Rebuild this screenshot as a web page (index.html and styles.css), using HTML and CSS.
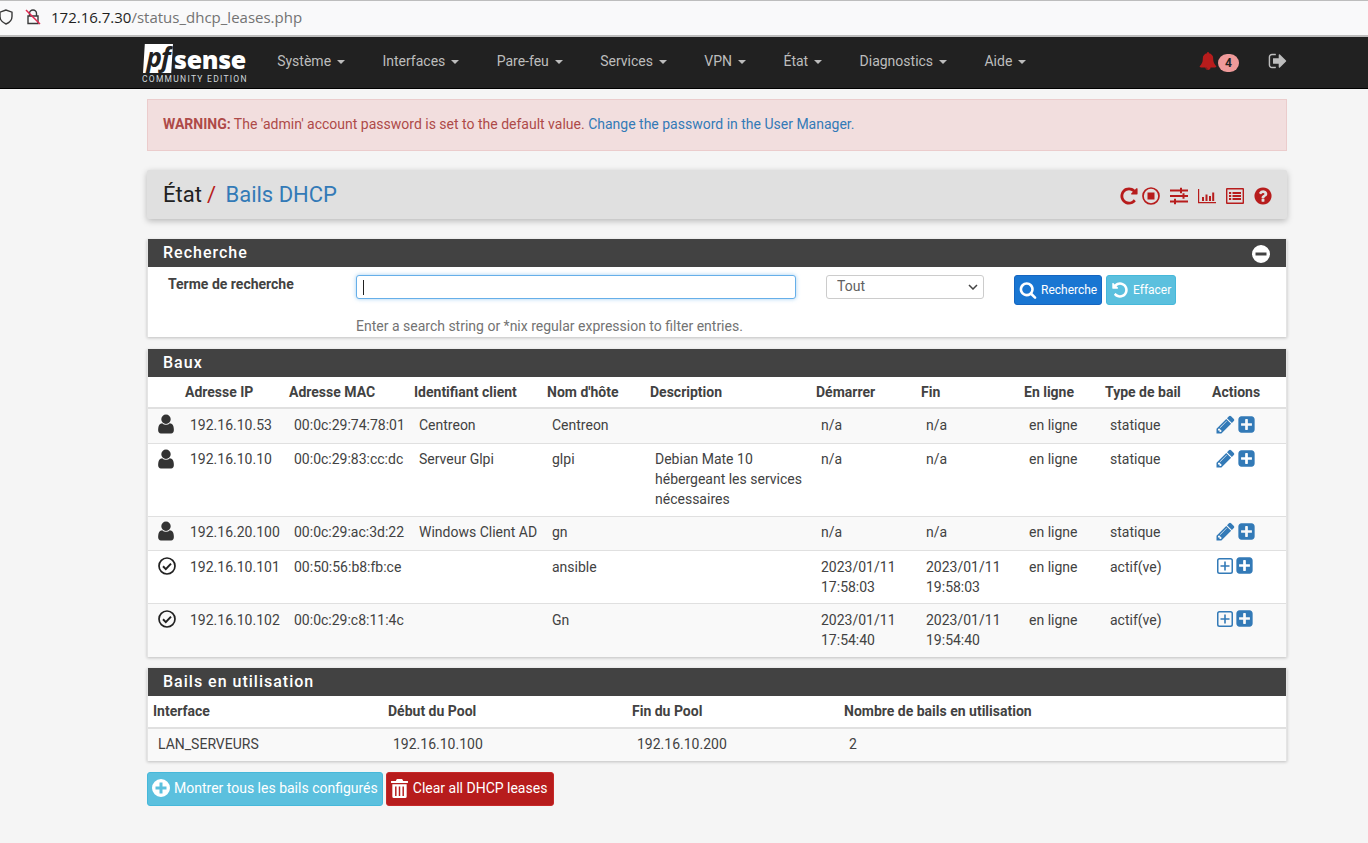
FILE: index.html
```html
<!DOCTYPE html>
<html lang="fr">
<head>
<meta charset="utf-8">
<title>pfSense - État: Bails DHCP</title>
<link rel="stylesheet" href="styles.css">
</head>
<body>
<svg class="sprite" xmlns="http://www.w3.org/2000/svg">
  <symbol id="i-search" viewBox="0 0 1792 1792"><path d="M1216 832q0-185-131.500-316.500t-316.500-131.500-316.500 131.500-131.500 316.500 131.500 316.500 316.500 131.500 316.500-131.500 131.500-316.500zm512 832q0 52-38 90t-90 38q-54 0-90-38l-343-342q-179 124-399 124-143 0-273.500-55.500t-225-150-150-225-55.500-273.500 55.500-273.500 150-225 225-150 273.500-55.500 273.500 55.500 225 150 150 225 55.500 273.500q0 220-124 399l343 343q37 37 37 90z"/></symbol>
  <symbol id="i-user" viewBox="0 0 1792 1792"><path d="M1536 1399q0 109-62.500 187t-150.500 78h-854q-88 0-150.500-78t-62.500-187q0-85 8.500-160.500t31.500-152 58.500-131 94-89 134.500-34.500q131 128 313 128t313-128q76 0 134.500 34.500t94 89 58.500 131 31.500 152 8.500 160.500zm-256-887q0 159-112.500 271.500t-271.500 112.500-271.500-112.500-112.500-271.500 112.500-271.500 271.500-112.500 271.500 112.500 112.500 271.500z"/></symbol>
  <symbol id="i-pencil" viewBox="0 0 1792 1792"><path d="M491 1536l91-91-235-235-91 91v107h128v128h107zm523-928q0-22-22-22-10 0-17 7l-542 542q-7 7-7 17 0 22 22 22 10 0 17-7l542-542q7-7 7-17zm-54-192l416 416-832 832h-416v-416zm683 96q0 53-37 90l-166 166-416-416 166-165q36-38 90-38 53 0 91 38l235 234q37 39 37 91z"/></symbol>
  <symbol id="i-plus-square" viewBox="0 0 1792 1792"><path d="M1408 960v-128q0-26-19-45t-45-19h-320v-320q0-26-19-45t-45-19h-128q-26 0-45 19t-19 45v320h-320q-26 0-45 19t-19 45v128q0 26 19 45t45 19h320v320q0 26 19 45t45 19h128q26 0 45-19t19-45v-320h320q26 0 45-19t19-45zm256-544v960q0 119-84.500 203.500t-203.500 84.500h-960q-119 0-203.500-84.500t-84.500-203.500v-960q0-119 84.500-203.500t203.500-84.500h960q119 0 203.500 84.500t84.500 203.500z"/></symbol>
  <symbol id="i-plus-square-o" viewBox="0 0 16 16"><path d="M2.500 0h11A2.500 2.500 0 0 1 16 2.500v11a2.500 2.500 0 0 1-2.500 2.500h-11A2.500 2.500 0 0 1 0 13.500v-11A2.500 2.500 0 0 1 2.500 0zm0 1.500a1 1 0 0 0-1 1v11a1 1 0 0 0 1 1h11a1 1 0 0 0 1-1v-11a1 1 0 0 0-1-1zM7.200 3.500h1.600v3.700h3.700v1.600H8.800v3.700H7.200V8.800H3.500V7.200h3.700z"/></symbol>
  <symbol id="i-check" viewBox="0 0 18 18"><circle cx="9" cy="9" r="8" fill="none" stroke="currentColor" stroke-width="1.700"/><path d="M5 9.300l2.800 2.800L13 6.600" fill="none" stroke="currentColor" stroke-width="2"/></symbol>
  <symbol id="i-bell" viewBox="0 0 1792 1792"><path d="M912 1696q0-16-16-16-59 0-101.500-42.500t-42.500-101.500q0-16-16-16t-16 16q0 73 51.500 124.500t124.500 51.500q16 0 16-16zm816-288q0 52-38 90t-90 38h-448q0 106-75 181t-181 75-181-75-75-181h-448q-52 0-90-38t-38-90q50-42 91-88t85-119.500 74.500-158.500 50-206 19.500-260q0-152 117-282.500t307-158.500q-8-19-8-39 0-40 28-68t68-28 68 28 28 68q0 20-8 39 190 28 307 158.500t117 282.500q0 139 19.500 260t50 206 74.500 158.500 85 119.500 91 88z"/></symbol>
  <symbol id="i-signout" viewBox="0 0 1792 1792"><path d="M704 1440q0 4 1 20t.5 26.500-3 23.500-10 19.500-20.500 6.500h-320q-119 0-203.500-84.500t-84.500-203.500v-704q0-119 84.500-203.500t203.500-84.500h320q13 0 22.500 9.500t9.500 22.500q0 4 1 20t.5 26.500-3 23.500-10 19.500-20.500 6.500h-320q-66 0-113 47t-47 113v704q0 66 47 113t113 47h312l11.500 1 11.500 3 8 5.500 7 9 2 13.500zm928-544q0 26-19 45l-544 544q-19 19-45 19t-45-19-19-45v-288h-448q-26 0-45-19t-19-45v-384q0-26 19-45t45-19h448v-288q0-26 19-45t45-19 45 19l544 544q19 19 19 45z"/></symbol>
  <symbol id="i-question" viewBox="0 0 1792 1792"><path d="M1024 1376v-192q0-14-9-23t-23-9h-192q-14 0-23 9t-9 23v192q0 14 9 23t23 9h192q14 0 23-9t9-23zm256-672q0-88-55.500-163t-138.500-116-170-41q-243 0-371 213-15 24 8 42l132 100q7 6 19 6 16 0 25-12 53-68 86-92 34-24 86-24 48 0 85.500 26t37.500 59q0 38-20 61t-68 45q-63 28-115.500 86.500t-52.500 125.500v36q0 14 9 23t23 9h192q14 0 23-9t9-23q0-19 21.500-49.500t54.500-49.500q32-18 49-28.500t46-35 44.500-48 28-60.500 12.500-81zm384 192q0 209-103 385.500t-279.500 279.500-385.500 103-385.500-103-279.500-279.500-103-385.500 103-385.500 279.500-279.500 385.500-103 385.500 103 279.500 279.500 103 385.500z"/></symbol>
  <symbol id="i-repeat" viewBox="0 0 1792 1792"><path d="M1664 256v448q0 26-19 45t-45 19h-448q-42 0-59-40-17-39 14-69l138-138q-148-137-349-137-104 0-198.500 40.500t-163.500 109.500-109.500 163.500-40.500 198.500 40.500 198.500 109.500 163.500 163.500 109.500 198.500 40.500q119 0 225-52t179-147q7-10 23-12 14 0 25 9l137 138q9 8 9.500 20.500t-7.500 22.500q-109 132-264 204.500t-327 72.500q-156 0-298-61t-245-164-164-245-61-298 61-298 164-245 245-164 298-61q147 0 284.500 55.500t244.500 156.500l130-129q29-31 70-14 39 17 39 59z"/></symbol>
  <symbol id="i-undo" viewBox="0 0 1792 1792"><path d="M1664 896q0 156-61 298t-164 245-245 164-298 61q-172 0-327-72.500t-264-204.500q-7-10-6.500-22.500t8.500-20.500l137-138q10-9 25-9 16 2 23 12 73 95 179 147t225 52q104 0 198.500-40.500t163.500-109.500 109.500-163.500 40.500-198.500-40.500-198.500-109.500-163.500-163.500-109.500-198.500-40.500q-98 0-188 35.500t-160 101.500l137 138q31 30 14 69-17 40-59 40h-448q-26 0-45-19t-19-45v-448q0-42 40-59 39-17 69 14l130 129q107-101 244.500-156.500t284.500-55.500q156 0 298 61t245 164 164 245 61 298z"/></symbol>
  <symbol id="i-stop" viewBox="0 0 18 18"><circle cx="9" cy="9" r="8" fill="none" stroke="currentColor" stroke-width="1.700"/><rect x="5.500" y="5.500" width="7" height="7" fill="currentColor"/></symbol>
  <symbol id="i-sliders" viewBox="0 0 18 18"><path d="M0 2.500h18v2H0zM0 8h18v2H0zM0 13.500h18v2H0zM10 .8h2v5.400h-2zM12.500 6.300h2v5.400h-2zM4 11.800h2v5.400H4z"/></symbol>
  <symbol id="i-chart" viewBox="0 0 18 18"><path d="M0 2h1.200v13H18v1.200H0zM4 10h2v4H4zM7.500 7.500h2V14h-2zM11 9h2v5h-2zM14.200 5.500h2V14h-2z"/></symbol>
  <symbol id="i-list" viewBox="0 0 18 18"><path d="M1 1h16a1 1 0 0 1 1 1v14a1 1 0 0 1-1 1H1a1 1 0 0 1-1-1V2a1 1 0 0 1 1-1zm.4 1.500v13h15.200v-13zM3 5h2.200v2H3zM3 8h2.200v2H3zM3 11h2.200v2H3zM6.500 5H15v2H6.500zM6.500 8H15v2H6.500zM6.500 11H15v2H6.500z"/></symbol>
  <symbol id="i-trash" viewBox="0 0 16 18"><path d="M5.500 0h5l1 2H16v1.800H0V2h4.500zM1.200 5h13.600v11.500a1.500 1.500 0 0 1-1.500 1.500H2.700a1.500 1.500 0 0 1-1.500-1.500zm2.600 2v9h1.400V7zm3.500 0v9h1.400V7zm3.500 0v9h1.400V7z"/></symbol>
  <symbol id="i-minus-circle" viewBox="0 0 18 18"><path d="M9 0a9 9 0 1 1 0 18A9 9 0 0 1 9 0zM3.500 7.500v3h11v-3z"/></symbol>
  <symbol id="i-plus-circle" viewBox="0 0 18 18"><path d="M9 0a9 9 0 1 1 0 18A9 9 0 0 1 9 0zM7.500 3.500v4h-4v3h4v4h3v-4h4v-3h-4v-4z"/></symbol>
</svg>

<div class="urlbar">
  <svg class="shield" viewBox="0 0 14 16"><path d="M7 1L1 3.200v4.300C1 11 3.500 13.600 7 15c3.500-1.400 6-4 6-7.500V3.200z" fill="none" stroke="#3a3a3a" stroke-width="1.400"/></svg>
  <svg class="lock" viewBox="0 0 16 16"><path d="M4.500 7V4.500a3.500 3.500 0 0 1 7 0V7M3 7h10v7.500H3z" fill="none" stroke="#3a3a3a" stroke-width="1.400"/><path d="M1 1l14 14" stroke="#e22850" stroke-width="1.500"/></svg>
  <span class="url"><span class="host">172.16.7.30</span>/status_dhcp_leases.php</span>
</div>

<nav class="navbar">
  <a class="brand">
    <span class="brand-top"><span class="brand-pf">pf</span><span class="brand-sense">sense</span></span>
    <span class="brand-sub">COMMUNITY EDITION</span>
  </a>
  <ul class="menu">
    <li>Système<span class="caret"></span></li>
    <li>Interfaces<span class="caret"></span></li>
    <li>Pare-feu<span class="caret"></span></li>
    <li>Services<span class="caret"></span></li>
    <li>VPN<span class="caret"></span></li>
    <li>État<span class="caret"></span></li>
    <li>Diagnostics<span class="caret"></span></li>
    <li>Aide<span class="caret"></span></li>
  </ul>
  <div class="nav-right">
    <svg class="ico bell"><use href="#i-bell"/></svg>
    <span class="badge">4</span>
    <svg class="ico signout"><use href="#i-signout"/></svg>
  </div>
</nav>

<main class="page">
  <div class="alert"><strong>WARNING:</strong> The 'admin' account password is set to the default value. <a>Change the password in the User Manager.</a></div>

  <header class="crumb">
    <h1><span class="crumb-root">État</span><span class="crumb-sep">/</span><a class="crumb-leaf">Bails DHCP</a></h1>
    <div class="crumb-icons">
      <svg class="ico c1"><use href="#i-repeat"/></svg>
      <svg class="ico c2"><use href="#i-stop"/></svg>
      <svg class="ico c3"><use href="#i-sliders"/></svg>
      <svg class="ico c4"><use href="#i-chart"/></svg>
      <svg class="ico c5"><use href="#i-list"/></svg>
      <svg class="ico c6"><use href="#i-question"/></svg>
    </div>
  </header>

  <section class="panel panel-search">
    <h2 class="panel-title">Recherche<svg class="ico collapse"><use href="#i-minus-circle"/></svg></h2>
    <div class="search-body">
      <div class="search-row">
        <label class="search-label">Terme de recherche</label>
        <div class="search-input"><span class="text-cursor"></span></div>
        <select class="search-select"><option>Tout</option></select>
        <button class="btn btn-primary"><svg class="ico b-ico"><use href="#i-search"/></svg>Recherche</button>
        <button class="btn btn-info"><svg class="ico b-ico"><use href="#i-undo"/></svg>Effacer</button>
      </div>
      <p class="help">Enter a search string or *nix regular expression to filter entries.</p>
    </div>
  </section>

  <section class="panel panel-leases">
    <h2 class="panel-title">Baux</h2>
    <table class="grid leases">
      <thead>
        <tr><th></th><th>Adresse IP</th><th>Adresse MAC</th><th>Identifiant client</th><th>Nom d'hôte</th><th>Description</th><th>Démarrer</th><th>Fin</th><th>En ligne</th><th>Type de bail</th><th>Actions</th></tr>
      </thead>
      <tbody>
        <tr>
          <td class="state"><svg class="ico st user"><use href="#i-user"/></svg></td>
          <td>192.16.10.53</td><td>00:0c:29:74:78:01</td><td>Centreon</td><td>Centreon</td><td></td><td>n/a</td><td>n/a</td><td>en ligne</td><td>statique</td>
          <td class="acts"><div class="acts-in"><svg class="ico pen"><use href="#i-pencil"/></svg><svg class="ico plus"><use href="#i-plus-square"/></svg></div></td>
        </tr>
        <tr>
          <td class="state"><svg class="ico st user"><use href="#i-user"/></svg></td>
          <td>192.16.10.10</td><td>00:0c:29:83:cc:dc</td><td>Serveur Glpi</td><td>glpi</td><td>Debian Mate 10 hébergeant les services nécessaires</td><td>n/a</td><td>n/a</td><td>en ligne</td><td>statique</td>
          <td class="acts"><div class="acts-in"><svg class="ico pen"><use href="#i-pencil"/></svg><svg class="ico plus"><use href="#i-plus-square"/></svg></div></td>
        </tr>
        <tr>
          <td class="state"><svg class="ico st user"><use href="#i-user"/></svg></td>
          <td>192.16.20.100</td><td>00:0c:29:ac:3d:22</td><td>Windows Client AD</td><td>gn</td><td></td><td>n/a</td><td>n/a</td><td>en ligne</td><td>statique</td>
          <td class="acts"><div class="acts-in"><svg class="ico pen"><use href="#i-pencil"/></svg><svg class="ico plus"><use href="#i-plus-square"/></svg></div></td>
        </tr>
        <tr>
          <td class="state"><svg class="ico st"><use href="#i-check"/></svg></td>
          <td>192.16.10.101</td><td>00:50:56:b8:fb:ce</td><td></td><td>ansible</td><td></td><td>2023/01/11 17:58:03</td><td>2023/01/11 19:58:03</td><td>en ligne</td><td>actif(ve)</td>
          <td class="acts"><div class="acts-in"><svg class="ico plus-o"><use href="#i-plus-square-o"/></svg><svg class="ico plus"><use href="#i-plus-square"/></svg></div></td>
        </tr>
        <tr>
          <td class="state"><svg class="ico st"><use href="#i-check"/></svg></td>
          <td>192.16.10.102</td><td>00:0c:29:c8:11:4c</td><td></td><td>Gn</td><td></td><td>2023/01/11 17:54:40</td><td>2023/01/11 19:54:40</td><td>en ligne</td><td>actif(ve)</td>
          <td class="acts"><div class="acts-in"><svg class="ico plus-o"><use href="#i-plus-square-o"/></svg><svg class="ico plus"><use href="#i-plus-square"/></svg></div></td>
        </tr>
      </tbody>
    </table>
  </section>

  <section class="panel panel-usage">
    <h2 class="panel-title">Bails en utilisation</h2>
    <table class="grid usage">
      <thead>
        <tr><th>Interface</th><th>Début du Pool</th><th>Fin du Pool</th><th>Nombre de bails en utilisation</th></tr>
      </thead>
      <tbody>
        <tr><td>LAN_SERVEURS</td><td>192.16.10.100</td><td>192.16.10.200</td><td>2</td></tr>
      </tbody>
    </table>
  </section>

  <div class="actions">
    <button class="btn btn-lg btn-info"><svg class="ico bl-ico"><use href="#i-plus-circle"/></svg>Montrer tous les bails configurés</button>
    <button class="btn btn-lg btn-danger"><svg class="ico bl-ico trash"><use href="#i-trash"/></svg>Clear all DHCP leases</button>
  </div>
</main>
</body>
</html>
```

FILE: styles.css
```css
* { box-sizing: border-box; }
html, body { margin: 0; padding: 0; }
body {
  background: #f5f5f5;
  color: #424242;
  font-family: Roboto, "Liberation Sans", sans-serif;
  font-size: 14px;
  line-height: 20px;
  overflow: hidden;
}
.sprite { display: none; }
.ico { display: block; fill: currentColor; flex: none; }

/* Browser address bar */
.urlbar {
  height: 37px;
  background: #f9f9fa;
  border-top: 1px solid #bdbdbd;
  border-bottom: 2px solid #bdbdbd;
  padding: 0 0 3px 0;
  display: flex;
  align-items: center;
}
.shield { width: 14px; height: 16px; margin-left: -1px; }
.lock { width: 16px; height: 16px; margin-left: 12px; }
.url {
  margin-left: 10px;
  font-family: "Open Sans", "Noto Sans", sans-serif;
  font-size: 15px;
  color: #737373;
}
.host { color: #1f1f1f; }

/* Top navigation */
.navbar {
  height: 52px;
  background: #212121;
  border-bottom: 1px solid #000;
  display: flex;
  align-items: center;
  padding-left: 142px;
}
.brand { width: 116.500px; display: flex; flex-direction: column; padding-top: 2px; }
.brand-top { display: flex; align-items: center; height: 30px; }
.brand-pf {
  width: 30px;
  height: 29px;
  margin-left: 1px;
  background: #fff;
  color: #212121;
  font: italic 700 26px/26px "Open Sans", sans-serif;
  text-align: center;
  clip-path: polygon(6% 0, 100% 0, 94% 100%, 0 100%);
  letter-spacing: -1px;
}
.brand-sense {
  font: 800 25px/30px "Open Sans", sans-serif;
  color: #fff;
  margin-left: 1px;
  letter-spacing: -.3px;
}
.brand-sub {
  font-size: 8.500px;
  line-height: 10px;
  letter-spacing: 1.270px;
  color: #cfd8dc;
  white-space: nowrap;
}
.menu {
  display: flex;
  list-style: none;
  margin: 0;
  padding: 0;
  color: #bdbdbd;
  position: relative;
  top: -2px;
}
.menu li { padding: 0 18.700px; white-space: nowrap; display: flex; align-items: center; }
.caret {
  width: 0;
  height: 0;
  margin-left: 6px;
  margin-top: 2px;
  border-top: 4px solid currentColor;
  border-left: 4px solid transparent;
  border-right: 4px solid transparent;
}
.nav-right { display: flex; align-items: center; margin-left: 154px; position: relative; top: -2px; }
.bell { width: 18px; height: 18px; color: #b71c1c; margin-right: 1px; }
.badge {
  width: 21px;
  height: 18px;
  border-radius: 9px;
  background: #ef9a9a;
  color: #212121;
  font-size: 12px;
  font-weight: 700;
  line-height: 18px;
  text-align: center;
  margin-top: 4px;
}
.signout { width: 20px; height: 20px; color: #bdbdbd; margin-left: 29px; }

/* Page */
.page { width: 1140px; margin-left: 147px; padding-top: 10px; }
.alert {
  height: 52px;
  background: #f2dede;
  border: 1px solid #ebcccc;
  color: #ae4a48;
  padding: 14px 15px;
  margin-bottom: 19px;
}
.alert a { color: #337ab7; }

.crumb {
  height: 49px;
  background: #e0e0e0;
  border-radius: 2px;
  box-shadow: 0 2px 6px rgba(0, 0, 0, .25);
  display: flex;
  align-items: center;
  justify-content: space-between;
  padding: 0 14px 0 16px;
  margin-bottom: 20px;
}
.crumb h1 { margin: 0; font-size: 22px; font-weight: 400; line-height: 28px; display: flex; color: #212121; }
.crumb-sep { color: #b71c1c; margin: 0 9.500px 0 5px; }
.crumb-leaf { color: #337ab7; }
.crumb-icons { display: flex; align-items: center; color: #b71c1c; padding-top: 2px; }
.c1 { width: 20px; height: 20px; }
.c2 { width: 18px; height: 18px; margin-left: 3px; }
.c3 { width: 18px; height: 18px; margin-left: 10px; }
.c4 { width: 18px; height: 18px; margin-left: 10px; }
.c5 { width: 18px; height: 18px; margin-left: 10px; }
.c6 { width: 20px; height: 20px; margin-left: 9px; }

.panel {
  background: #fff;
  border-left: 1px solid #e4e4e4;
  border-right: 1px solid #e4e4e4;
  box-shadow: 0 1px 3px rgba(0, 0, 0, .22);
}
.panel-title {
  height: 28px;
  margin: 0;
  padding: 0 16px 0 15px;
  background: #424242;
  color: #fff;
  font-size: 16px;
  font-weight: 500;
  line-height: 28px;
  letter-spacing: 1px;
  display: flex;
  align-items: center;
  justify-content: space-between;
}
.collapse { width: 18px; height: 18px; margin-top: 1px; }
.panel-search { height: 98px; margin-bottom: 12px; }
.panel-leases { margin-bottom: 11px; }
.panel-usage { margin-bottom: 11px; }

.search-body { padding: 8px 0 0 20px; }
.search-row { display: flex; align-items: flex-start; height: 30px; }
.search-label { width: 188px; font-weight: 700; line-height: 18px; color: #424242; }
.search-input {
  width: 440px;
  height: 24px;
  background: #fff;
  border: 1px solid #66afe9;
  border-radius: 3px;
  box-shadow: 0 0 4px rgba(102, 175, 233, .6);
  padding: 4px 6px;
}
.text-cursor { display: block; width: 1px; height: 15px; background: #212121; }
.search-select {
  width: 158px;
  height: 24px;
  margin-left: 30px;
  padding: 0 6px 2px 10px;
  background: #fff url("data:image/svg+xml,%3Csvg xmlns='http://www.w3.org/2000/svg' width='10' height='6'%3E%3Cpath d='M1 1l4 4 4-4' fill='none' stroke='%23444' stroke-width='1.500'/%3E%3C/svg%3E") no-repeat right 5px center;
  border: 1px solid #ccc;
  border-radius: 3px;
  color: #616161;
  font: 14px Roboto, sans-serif;
  appearance: none;
}
.btn {
  display: flex;
  align-items: center;
  height: 30px;
  border: 1px solid transparent;
  border-radius: 3px;
  color: #fff;
  font: 12px Roboto, sans-serif;
  padding: 0 4px;
  white-space: nowrap;
}
.b-ico { width: 18px; height: 18px; margin-right: 4px; }
.search-row .btn-primary { margin-left: 30px; width: 88px; }
.search-row .btn-info { margin-left: 4px; width: 70px; }
.btn-primary { background: #1976d2; border-color: #1565c0; }
.btn-info { background: #5bc0de; border-color: #46b8da; }
.btn-danger { background: #b71c1c; border-color: #c62828; }
.help { margin: 11px 0 0 188px; color: #737373; line-height: 20px; }

.grid { width: 100%; border-collapse: collapse; table-layout: fixed; }
.grid th {
  height: 31px;
  padding: 0;
  text-align: left;
  font-weight: 700;
  color: #424242;
  border-bottom: 2px solid #e0e0e0;
  white-space: nowrap;
}
.grid td { padding: 6.300px 5px; vertical-align: top; border-top: 1px solid #e0e0e0; }
.grid tbody tr:nth-child(odd) { background: #f9f9f9; }
.leases tbody td { padding-top: 5.300px; padding-bottom: 7.300px; }
.leases tbody tr:nth-child(1) td { padding-top: 6.300px; padding-bottom: 7.300px; }
.leases tbody tr:nth-child(2) td.state, .leases tbody tr:nth-child(2) td.acts { padding-top: 6.300px; padding-bottom: 6.300px; }
.leases tbody tr:nth-child(4) td { padding-top: 5.800px; padding-bottom: 6.800px; }
.leases th:nth-child(1) { width: 37px; }
.leases th:nth-child(2) { width: 104px; }
.leases th:nth-child(3) { width: 125px; }
.leases th:nth-child(4) { width: 133px; }
.leases th:nth-child(5) { width: 103px; }
.leases th:nth-child(6) { width: 166px; }
.leases th:nth-child(7) { width: 105px; }
.leases th:nth-child(8) { width: 103px; }
.leases th:nth-child(9) { width: 81px; }
.leases th:nth-child(10) { width: 107px; }
.grid td.state { padding-left: 10px; padding-right: 0; }
.st { width: 18px; height: 18px; color: #212121; }
.st.user { width: 22px; height: 22px; margin: -2px 0 -2px -3px; color: #333; }
.grid td.acts { padding-left: 3px; padding-right: 0; }
.acts-in { display: flex; align-items: flex-start; gap: .5px; }
.pen { width: 21px; height: 21px; color: #337ab7; margin-top: -1.500px; }
.plus { width: 19px; height: 19px; color: #337ab7; margin-top: -.5px; }
.plus-o { width: 16px; height: 16px; color: #337ab7; margin: 1px 1px 0 2px; }

.usage th { padding-left: 5px; height: 32px; }
.usage th:nth-child(1) { width: 235px; }
.usage th:nth-child(2) { width: 244px; }
.usage th:nth-child(3) { width: 212px; }
.usage td { padding: 5.300px 5px 6.300px 10px; }

.actions { display: flex; gap: 3px; }
.btn-lg { height: 34px; font-size: 14px; padding: 0 4px 1px; }
.btn-danger.btn-lg { padding-right: 6px; }
.bl-ico { width: 18px; height: 18px; margin-right: 4px; }
.bl-ico.trash { width: 17px; height: 19px; margin: 0 5px 0 0; }
```
